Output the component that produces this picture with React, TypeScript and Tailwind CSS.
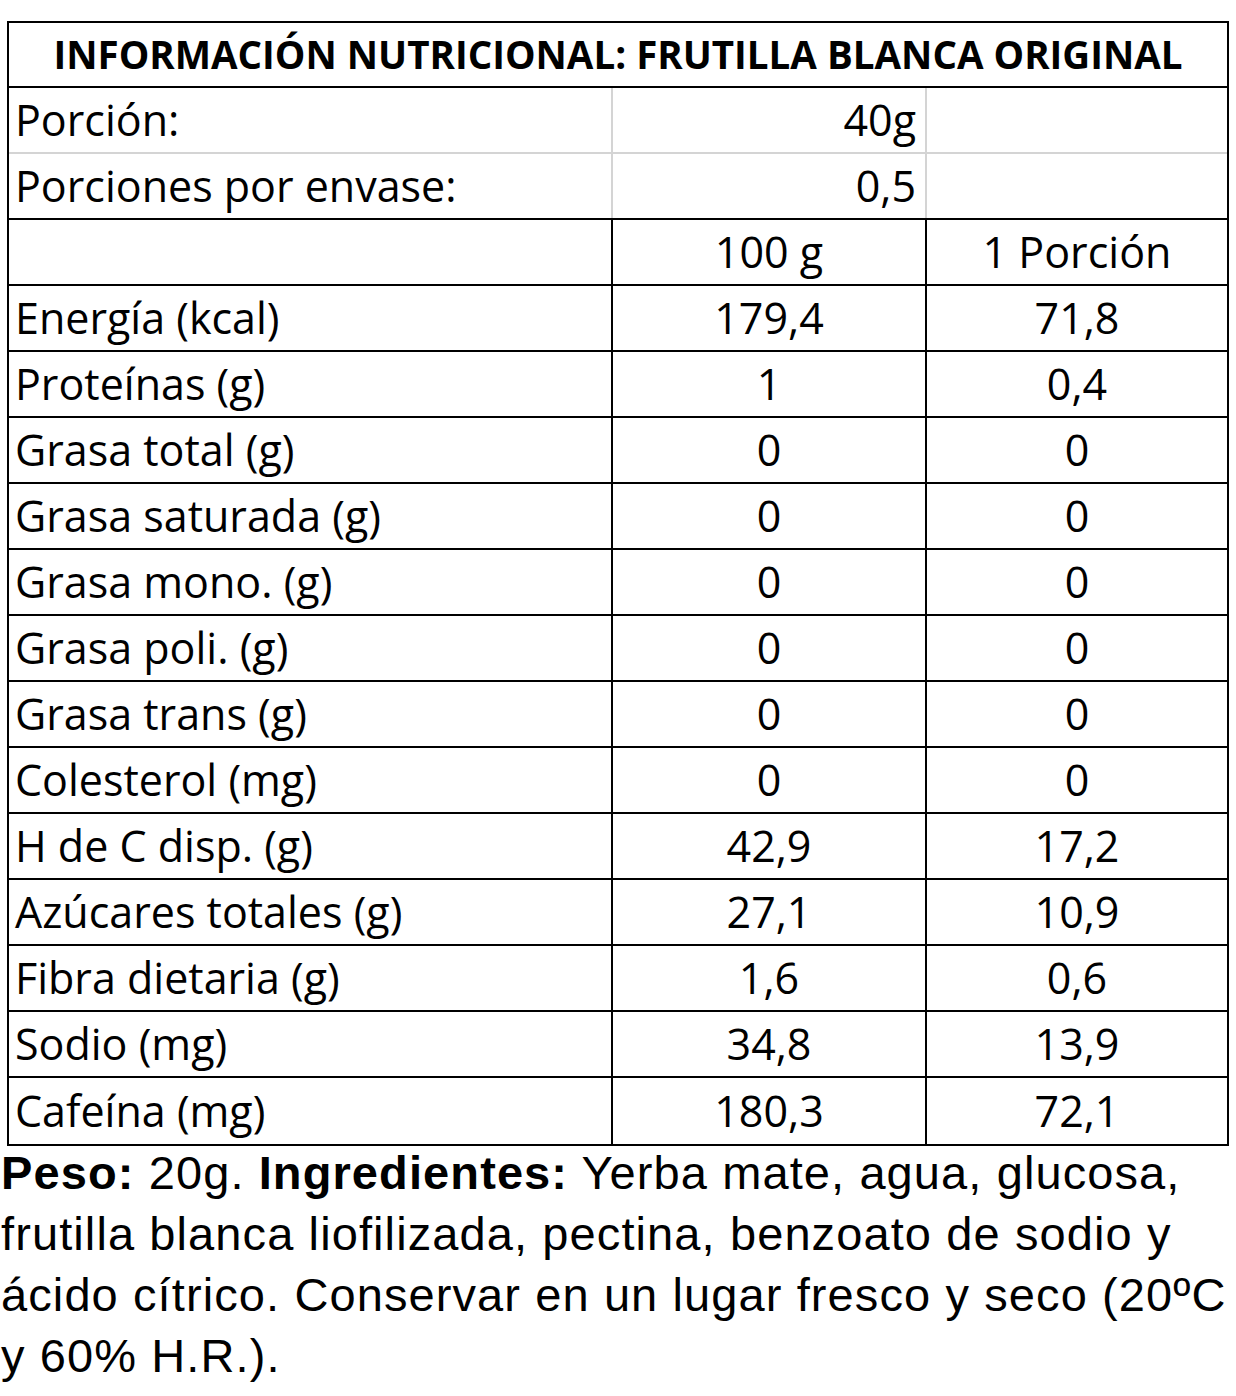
import React from "react";

type Row = { label: string; a: string; b: string };

const rows: Row[] = [
  { label: "Energía (kcal)", a: "179,4", b: "71,8" },
  { label: "Proteínas (g)", a: "1", b: "0,4" },
  { label: "Grasa total (g)", a: "0", b: "0" },
  { label: "Grasa saturada (g)", a: "0", b: "0" },
  { label: "Grasa mono. (g)", a: "0", b: "0" },
  { label: "Grasa poli. (g)", a: "0", b: "0" },
  { label: "Grasa trans (g)", a: "0", b: "0" },
  { label: "Colesterol (mg)", a: "0", b: "0" },
  { label: "H de C disp. (g)", a: "42,9", b: "17,2" },
  { label: "Azúcares totales (g)", a: "27,1", b: "10,9" },
  { label: "Fibra dietaria (g)", a: "1,6", b: "0,6" },
  { label: "Sodio (mg)", a: "34,8", b: "13,9" },
  { label: "Cafeína (mg)", a: "180,3", b: "72,1" },
];

export default function App() {
  return (
    <div className="min-h-screen w-full bg-white pt-[21px] text-black">
      <div
        className="ml-[7px] w-[1222px] border-2 border-black text-[43px] leading-none"
        style={{ fontFamily: '"Open Sans", "Noto Sans", sans-serif' }}
      >
        {/* title */}
        <div className="flex h-[65px] items-center justify-center border-b-2 border-black text-[38.5px] font-bold">
          INFORMACIÓN NUTRICIONAL: FRUTILLA BLANCA ORIGINAL
        </div>

        {/* serving rows */}
        <div className="grid h-[66px] grid-cols-[602px_314px_302px] border-b-2 border-[#d4d4d4]">
          <div className="flex items-center pb-[2px] pl-[6px]">Porción:</div>
          <div className="flex items-center justify-end border-l-2 border-[#d4d4d4] pb-[2px] pr-[9px]">40g</div>
          <div className="border-l-2 border-[#d4d4d4]" />
        </div>
        <div className="grid h-[66px] grid-cols-[602px_314px_302px] border-b-2 border-black">
          <div className="flex items-center pb-[2px] pl-[6px]">Porciones por envase:</div>
          <div className="flex items-center justify-end border-l-2 border-[#d4d4d4] pb-[2px] pr-[9px]">0,5</div>
          <div className="border-l-2 border-[#d4d4d4]" />
        </div>

        {/* column header */}
        <div className="grid h-[66px] grid-cols-[602px_314px_302px] border-b-2 border-black">
          <div />
          <div className="flex items-center justify-center border-l-2 border-black pb-[2px]">100 g</div>
          <div className="flex items-center justify-center border-l-2 border-black pb-[2px]">1 Porción</div>
        </div>

        {rows.map((r, i) => (
          <div
            key={r.label}
            className={
              "grid h-[66px] grid-cols-[602px_314px_302px] " +
              (i < rows.length - 1 ? "border-b-2 border-black" : "")
            }
          >
            <div className="flex items-center pb-[2px] pl-[6px]">{r.label}</div>
            <div className="flex items-center justify-center border-l-2 border-black pb-[2px]">{r.a}</div>
            <div className="flex items-center justify-center border-l-2 border-black pb-[2px]">{r.b}</div>
          </div>
        ))}
      </div>

      <div
        className="-mt-[4px] flex flex-col whitespace-nowrap pl-[1px] text-[47px] leading-[61px] tracking-[1.1px]"
        style={{ fontFamily: '"Liberation Sans", Arial, sans-serif' }}
      >
        <span>
          <b>Peso:</b> 20g. <b>Ingredientes:</b> Yerba mate, agua, glucosa,
        </span>
        <span>frutilla blanca liofilizada, pectina, benzoato de sodio y</span>
        <span>ácido cítrico. Conservar en un lugar fresco y seco (20ºC</span>
        <span>y 60% H.R.).</span>
      </div>
    </div>
  );
}
